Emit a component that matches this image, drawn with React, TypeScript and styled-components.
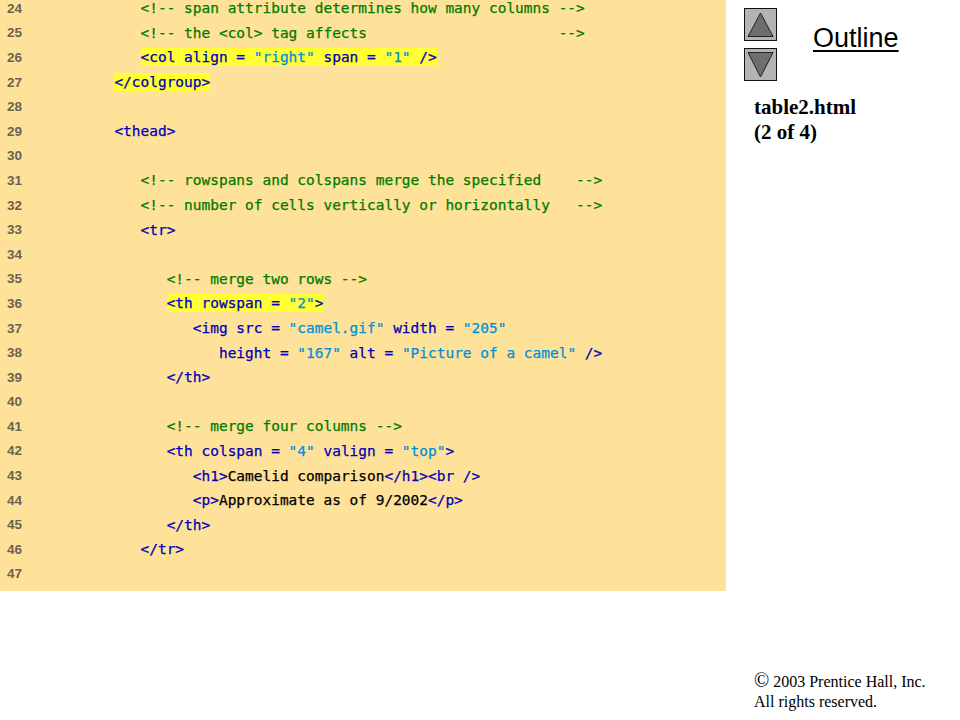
import React from "react";
import styled, { createGlobalStyle } from "styled-components";

const Global = createGlobalStyle`
  html, body { margin: 0; padding: 0; background: #fff; }
  #root { width: 960px; height: 720px; overflow: hidden; }
`;

const Slide = styled.div`
  display: flex;
  width: 960px;
  height: 720px;
`;

const CodePanel = styled.main`
  width: 726px;
  height: 591px;
  flex: none;
  background: #ffe299;
  box-sizing: border-box;
`;

const Row = styled.div`
  display: grid;
  grid-template-columns: 114.4px 1fr;
  height: 24.6px;
  align-items: center;
`;

const LineNo = styled.span`
  font: bold 13.5px "Liberation Sans", Arial, sans-serif;
  color: #6b6250;
  padding-left: 7px;
  position: relative;
  top: -4px;
`;

const Code = styled.code`
  font: 14.47px/18px "DejaVu Sans Mono", monospace;
  white-space: pre;
  position: relative;
  top: -4px;
  -webkit-text-stroke: 0.25px currentColor;
`;

const Tag = styled.span`
  color: #0000b8;
`;
const Comment = styled.span`
  color: #007a00;
`;
const Value = styled.span`
  color: #0090d8;
`;
const Plain = styled.span`
  color: #000;
`;
const Mark = styled.span`
  display: inline-block;
  background: #ffff33;
  height: 18px;
`;

const Side = styled.aside`
  flex: 1;
  display: flex;
  flex-direction: column;
  padding: 8px 0 8px 18px;
  box-sizing: border-box;
`;

const NavRow = styled.div`
  display: flex;
  align-items: center;
`;

const Arrows = styled.div`
  display: flex;
  flex-direction: column;
  gap: 7px;
`;

const ArrowButton = styled.button`
  width: 33px;
  height: 33px;
  padding: 0;
  border: 1px solid #111;
  background: #b4b4b4;
  display: block;
  svg { display: block; }
`;

const OutlineLabel = styled.span`
  font: 27px "Liberation Sans", Arial, sans-serif;
  color: #000;
  text-decoration: underline;
  text-decoration-thickness: 2px;
  text-underline-offset: 3px;
  margin-left: 36px;
  margin-top: -13px;
`;

const FileName = styled.div`
  font: bold 21px/25px "Liberation Serif", "Times New Roman", serif;
  color: #000;
  margin: 14px 0 0 10px;
`;

const Copyright = styled.div`
  margin: auto 0 0 10px;
  font: 16px/20px "Liberation Serif", "Times New Roman", serif;
  color: #000;
`;

const CopyMark = styled.span`
  font-size: 20px;
  line-height: 16px;
`;

const T = Tag, C = Comment, V = Value, P = Plain;

const lines: React.ReactNode[] = [
  <C>{"   <!-- span attribute determines how many columns -->"}</C>,
  <C>{"   <!-- the <col> tag affects                      -->"}</C>,
  <>{"   "}<Mark><T>{"<col align = "}</T><V>"right"</V><T>{" span = "}</T><V>"1"</V><T>{" />"}</T></Mark></>,
  <Mark><T>{"</colgroup>"}</T></Mark>,
  null,
  <T>{"<thead>"}</T>,
  null,
  <C>{"   <!-- rowspans and colspans merge the specified    -->"}</C>,
  <C>{"   <!-- number of cells vertically or horizontally   -->"}</C>,
  <T>{"   <tr>"}</T>,
  null,
  <C>{"      <!-- merge two rows -->"}</C>,
  <>{"      "}<Mark><T>{"<th rowspan = "}</T><V>"2"</V><T>{">"}</T></Mark></>,
  <><T>{"         <img src = "}</T><V>"camel.gif"</V><T>{" width = "}</T><V>"205"</V></>,
  <><T>{"            height = "}</T><V>"167"</V><T>{" alt = "}</T><V>"Picture of a camel"</V><T>{" />"}</T></>,
  <T>{"      </th>"}</T>,
  null,
  <C>{"      <!-- merge four columns -->"}</C>,
  <><T>{"      <th colspan = "}</T><V>"4"</V><T>{" valign = "}</T><V>"top"</V><T>{">"}</T></>,
  <><T>{"         <h1>"}</T><P>Camelid comparison</P><T>{"</h1><br />"}</T></>,
  <><T>{"         <p>"}</T><P>Approximate as of 9/2002</P><T>{"</p>"}</T></>,
  <T>{"      </th>"}</T>,
  <T>{"   </tr>"}</T>,
  null,
];

export default function App() {
  return (
    <>
      <Global />
      <Slide>
        <CodePanel>
          {lines.map((line, i) => (
            <Row key={i}>
              <LineNo>{i + 24}</LineNo>
              <Code>{line}</Code>
            </Row>
          ))}
        </CodePanel>
        <Side>
          <NavRow>
            <Arrows>
              <ArrowButton aria-label="Previous">
                <svg width="31" height="31" viewBox="0 0 31 31">
                  <polygon points="15.5,4 28,27.5 3,27.5" fill="#6e6e6e" stroke="#222" strokeWidth="1" />
                </svg>
              </ArrowButton>
              <ArrowButton aria-label="Next">
                <svg width="31" height="31" viewBox="0 0 31 31">
                  <polygon points="3,3.5 28,3.5 15.5,28" fill="#6e6e6e" stroke="#222" strokeWidth="1" />
                </svg>
              </ArrowButton>
            </Arrows>
            <OutlineLabel>Outline</OutlineLabel>
          </NavRow>
          <FileName>
            table2.html
            <br />
            (2 of 4)
          </FileName>
          <Copyright>
            <CopyMark>©</CopyMark> 2003 Prentice Hall, Inc.
            <br />
            All rights reserved.
          </Copyright>
        </Side>
      </Slide>
    </>
  );
}
